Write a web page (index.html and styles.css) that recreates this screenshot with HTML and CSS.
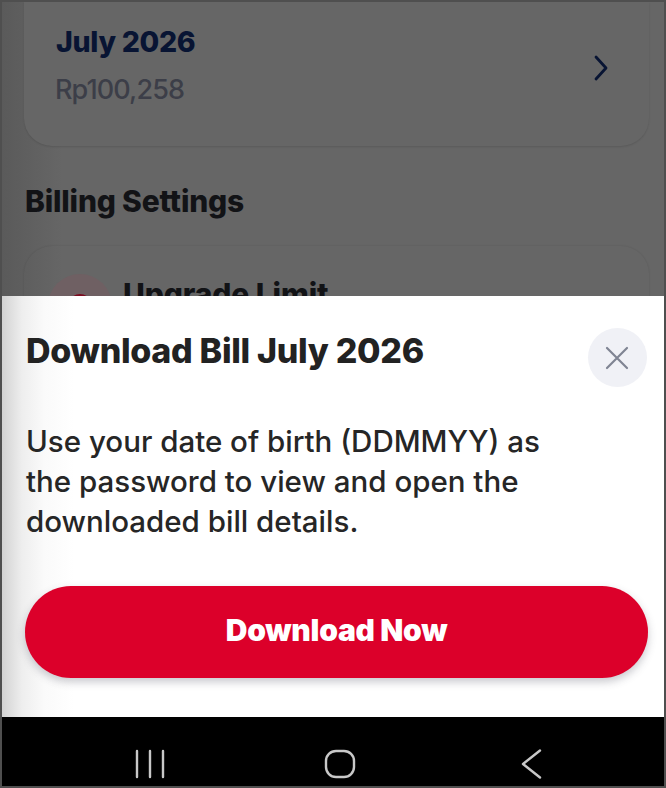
FILE: index.html
```html
<!DOCTYPE html>
<html lang="en">
<head>
    <meta charset="UTF-8">
    <title>Download Bill</title>
    <link rel="stylesheet" href="styles.css">
</head>
<body>
    <div class="frame">
        <div class="backdrop">
            <div class="bill-card">
                <div>
                    <div class="bill-month">July 2026</div>
                    <div class="bill-amount">Rp100,258</div>
                </div>
                <svg class="chevron" width="16" height="28" viewBox="0 0 16 28">
                    <path d="M4 3 L14 14 L4 25" fill="none" stroke="#081433" stroke-width="2.800" stroke-linecap="round" stroke-linejoin="round"/>
                </svg>
            </div>
            <h2 class="section-title">Billing Settings</h2>
            <div class="setting-card">
                <div class="setting-icon"><span class="setting-dot"></span></div>
                <div class="setting-name">Upgrade Limit</div>
            </div>
        </div>

        <div class="sheet">
            <div class="sheet-head">
                <h1 class="sheet-title">Download Bill July 2026</h1>
                <div class="close-btn">
                    <svg class="close-icon" width="24" height="24" viewBox="0 0 24 24">
                        <path d="M2 2 L22 22 M22 2 L2 22" fill="none" stroke="#7f8493" stroke-width="2.200" stroke-linecap="round"/>
                    </svg>
                </div>
            </div>
            <p class="sheet-text">Use your date of birth (DDMMYY) as the password to view and open the downloaded bill details.</p>
            <div class="download-btn">Download Now</div>
        </div>

        <div class="nav-bar">
            <svg width="32" height="30" viewBox="0 0 32 30">
                <path d="M3 2 V28 M16 2 V28 M29 2 V28" fill="none" stroke="#c8c8c8" stroke-width="2.400" stroke-linecap="round"/>
            </svg>
            <svg class="nav-home" width="32" height="30" viewBox="0 0 32 30">
                <rect x="2" y="2" width="28" height="26" rx="10" fill="none" stroke="#c8c8c8" stroke-width="2.400"/>
            </svg>
            <svg class="nav-back" width="22" height="30" viewBox="0 0 22 30">
                <path d="M19 1.500 L2 15 L19 28.500" fill="none" stroke="#c8c8c8" stroke-width="2.400" stroke-linecap="round" stroke-linejoin="round"/>
            </svg>
        </div>
    </div>
</body>
</html>
```

FILE: styles.css
```css
* {
    box-sizing: border-box;
}
body {
    margin: 0;
    font-family: Inter, "Liberation Sans", sans-serif;
    background: #4f4f4f;
}
.frame {
    width: 666px;
    height: 788px;
    border: 2px solid #4f4f4f;
    display: flex;
    flex-direction: column;
    overflow: hidden;
}
.backdrop {
    height: 294px;
    padding: 0 15px 0 22px;
    background: linear-gradient(90deg, #5a5a5a, #666 60px);
    overflow: hidden;
}
.bill-card {
    height: 144px;
    padding: 20px 41px 0 32px;
    display: flex;
    justify-content: space-between;
    align-items: flex-start;
    background: #666;
    border-radius: 0 0 28px 28px;
    box-shadow: 0 1px 2px rgba(0,0,0,0.12);
}
.bill-month {
    font-size: 28.500px;
    font-weight: 800;
    line-height: 40px;
    letter-spacing: -0.3px;
    color: #081433;
}
.bill-amount {
    font-size: 27px;
    font-weight: 500;
    line-height: 40px;
    margin-top: 8px;
    margin-left: -1px;
    letter-spacing: -0.9px;
    color: #3c3e48;
}
.chevron {
    margin-top: 32px;
}
.section-title {
    margin: 35px 0 0 1px;
    font-size: 30px;
    font-weight: 800;
    line-height: 40px;
    letter-spacing: -0.2px;
    color: #121316;
}
.setting-card {
    margin-top: 25px;
    height: 120px;
    padding: 30px 24px;
    display: flex;
    gap: 11px;
    border-radius: 28px;
    box-shadow: 0 0 2px rgba(0,0,0,0.14);
}
.setting-icon {
    width: 64px;
    height: 64px;
    margin-top: -2px;
    border-radius: 50%;
    background: #6f6063;
    display: flex;
    justify-content: center;
    padding-top: 20px;
}
.setting-dot {
    width: 24px;
    height: 24px;
    border-radius: 50%;
    background: #7c0b20;
}
.setting-name {
    font-size: 30px;
    font-weight: 800;
    line-height: 36px;
    letter-spacing: -0.1px;
    color: #121316;
}
.sheet {
    height: 421px;
    padding: 32px 17px 0 24px;
    background: linear-gradient(90deg, #d2d2d2, #eeeeee 20px, #fafafa 42px, #fff 72px);
}
.sheet-head {
    display: flex;
    justify-content: space-between;
    align-items: flex-start;
}
.sheet-title {
    margin: 0;
    font-size: 34px;
    font-weight: 800;
    line-height: 46px;
    letter-spacing: -0.3px;
    color: #222;
}
.close-btn {
    width: 59px;
    height: 59px;
    border-radius: 50%;
    background: #f0f1f6;
    display: flex;
    align-items: center;
    justify-content: center;
}
.close-icon {
    margin-left: -1px;
}
.sheet-text {
    margin: 34px 0 0 0;
    width: 560px;
    font-size: 29.500px;
    font-weight: 500;
    line-height: 40px;
    color: #262626;
}
.download-btn {
    margin: 45px 0 0 -1px;
    width: 623px;
    height: 92px;
    padding-bottom: 5px;
    border-radius: 46px;
    background: #dc002a;
    box-shadow: 0 4px 8px rgba(60,60,80,0.28);
    color: #fff;
    font-size: 30px;
    font-weight: 900;
    letter-spacing: -0.3px;
    display: flex;
    align-items: center;
    justify-content: center;
}
.nav-bar {
    flex: 1;
    padding: 32px 0 0 132px;
    background: #000;
    display: flex;
    align-items: flex-start;
}
.nav-home {
    margin-left: 158px;
}
.nav-back {
    margin-left: 165px;
}
```
